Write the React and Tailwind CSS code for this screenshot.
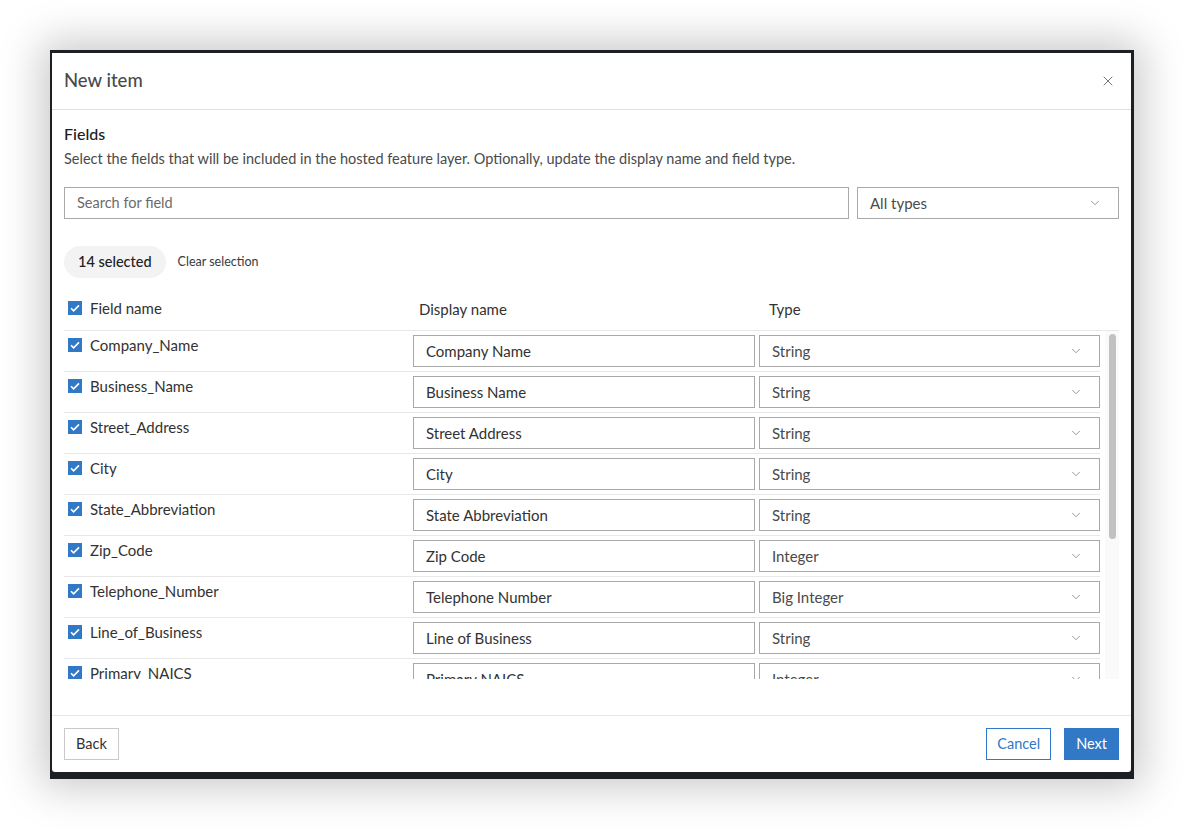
import { ChevronDown, X } from "lucide-react";

const fields = [
  { name: "Company_Name", display: "Company Name", type: "String" },
  { name: "Business_Name", display: "Business Name", type: "String" },
  { name: "Street_Address", display: "Street Address", type: "String" },
  { name: "City", display: "City", type: "String" },
  { name: "State_Abbreviation", display: "State Abbreviation", type: "String" },
  { name: "Zip_Code", display: "Zip Code", type: "Integer" },
  { name: "Telephone_Number", display: "Telephone Number", type: "Big Integer" },
  { name: "Line_of_Business", display: "Line of Business", type: "String" },
  { name: "Primary_NAICS", display: "Primary NAICS", type: "Integer" },
  { name: "Primary_SIC", display: "Primary SIC", type: "Integer" },
  { name: "Employees", display: "Employees", type: "Integer" },
  { name: "Sales_Volume", display: "Sales Volume", type: "Double" },
  { name: "Latitude", display: "Latitude", type: "Double" },
  { name: "Longitude", display: "Longitude", type: "Double" },
];

function Check() {
  return (
    <span className="grid h-[14px] w-[14px] shrink-0 place-items-center bg-[#3178c6]">
      <svg viewBox="0 0 14 14" className="h-[14px] w-[14px]" fill="none">
        <path d="M3 7.2l2.6 2.6L11 4.4" stroke="white" strokeWidth="1.6" />
      </svg>
    </span>
  );
}

function Select({ value, className = "" }) {
  return (
    <div
      className={`flex h-8 items-center justify-between border border-[#a9a9a9] bg-white pl-3 pr-4 text-[15px] text-[#4a4a4a] ${className}`}
    >
      <span>{value}</span>
      <ChevronDown className="h-3.5 w-3.5 text-[#8a8a8a]" strokeWidth={1.5} />
    </div>
  );
}

export default function App() {
  return (
    <div
      className="min-h-[829px] w-full bg-white pt-[50px] pl-[50px]"
      style={{ fontFamily: "Lato, 'Noto Sans', sans-serif" }}
    >
      <div className="h-[729px] w-[1084px] bg-[#1c1f24] pt-[3px] pl-[2px] pr-[3px] pb-[7px] shadow-[0_0_40px_8px_rgba(0,0,0,0.22)]">
        <div className="flex h-full flex-col rounded-b-[3px] bg-white">
          <div className="flex h-[57px] shrink-0 items-center justify-between border-b border-[#dfdfdf] pl-3 pr-[15px]">
            <h1 className="text-[18.5px] font-medium text-[#4a4a4a]">New item</h1>
            <X className="h-4 w-4 text-[#6a6a6a]" strokeWidth={1.4} />
          </div>

          <div className="flex min-h-0 flex-1 flex-col px-3 pt-3">
            <h2 className="text-[16px] font-medium leading-6 text-[#202020]">Fields</h2>
            <p className="mt-[3px] text-[14.5px] leading-5 text-[#4a4a4a]">
              Select the fields that will be included in the hosted feature layer. Optionally, update the display name and field type.
            </p>

            <div className="mt-[18px] flex gap-2">
              <div className="flex h-8 flex-1 items-center border border-[#a9a9a9] px-3 text-[14.5px] text-[#6b6b6b]">
                Search for field
              </div>
              <Select value="All types" className="w-[262px]" />
            </div>

            <div className="mt-[27px] flex items-center gap-3">
              <span className="flex h-8 items-center rounded-full bg-[#f3f3f3] px-[14px] text-[14.5px] font-medium text-[#202020]">
                14 selected
              </span>
              <span className="text-[12.5px] text-[#3a3a3a]">Clear selection</span>
            </div>

            <div className="mt-3 flex h-[41px] items-start border-b border-[#e8e8e8] pr-[19px]">
              <div className="flex w-[349px] items-center gap-2 pt-[7px] pl-1 text-[15px] text-[#323232]">
                <Check />
                <span>Field name</span>
              </div>
              <div className="w-[350px] pt-2 pl-[6px] text-[15px] text-[#323232]">Display name</div>
              <div className="pt-2 pl-[6px] text-[15px] text-[#323232]">Type</div>
            </div>

            <div className="relative h-[348px] overflow-hidden">
              <div className="pr-[19px]">
                {fields.map((f) => (
                  <div key={f.name} className="flex h-[41px] items-start border-b border-[#e8e8e8]">
                    <div className="flex w-[349px] items-center gap-2 pt-[3px] pl-1 text-[15px] text-[#323232]">
                      <Check />
                      <span>{f.name}</span>
                    </div>
                    <div className="mt-1 flex h-8 w-[342px] items-center border border-[#a9a9a9] px-3 text-[15px] text-[#323232]">
                      {f.display}
                    </div>
                    <Select value={f.type} className="mt-1 ml-[4px] flex-1" />
                  </div>
                ))}
              </div>
              <div className="absolute top-0 right-0 h-full w-[14px] bg-[#fafafa]">
                <div className="mx-auto mt-[3px] h-[205px] w-[7px] rounded-full bg-[#c1c1c1]" />
              </div>
            </div>
            <div className="flex-1" />
          </div>

          <div className="flex shrink-0 items-center justify-between border-t border-[#e8e8e8] px-3 py-3">
            <button className="h-8 border border-[#c9c9c9] px-[11px] text-[14.5px] text-[#323232]">Back</button>
            <div className="flex gap-[13px]">
              <button className="h-8 border border-[#3178c6] px-[10px] text-[14.5px] text-[#3178c6]">Cancel</button>
              <button className="h-8 bg-[#3178c6] px-3 text-[14.5px] text-white">Next</button>
            </div>
          </div>
        </div>
      </div>
    </div>
  );
}
